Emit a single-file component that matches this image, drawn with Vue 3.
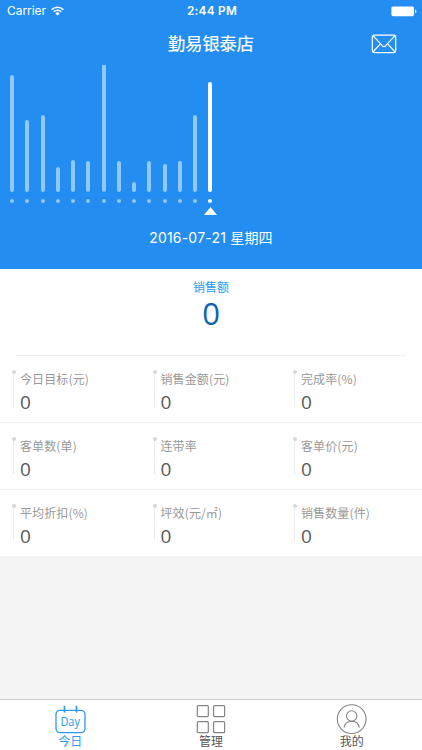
<script setup>
const bars = [117, 72, 77.5, 25.5, 32, 31.5, 127, 31.5, 10, 31.5, 28, 31.5, 77.5, 110]

const rows = [
  ['今日目标(元)', '销售金额(元)', '完成率(%)'],
  ['客单数(单)', '连带率', '客单价(元)'],
  ['平均折扣(%)', '坪效(元/㎡)', '销售数量(件)'],
]
</script>

<template>
  <div class="screen">
    <header class="hero">
      <div class="status">
        <div class="carrier">
          <span>Carrier</span>
          <svg class="wifi" viewBox="0 0 13 10" fill="none" stroke="#fff" stroke-width="1.6">
            <path d="M.6 3.7a8.4 8.4 0 0 1 11.8 0" />
            <path d="M2.7 5.8a5.4 5.4 0 0 1 7.6 0" />
            <path d="M6.5 9.6 4.3 7.4a3.1 3.1 0 0 1 4.4 0z" fill="#fff" stroke="none" />
          </svg>
        </div>
        <span class="clock">2:44 PM</span>
        <svg class="battery" viewBox="0 0 26 11">
          <rect x=".4" y=".4" width="22.6" height="9.8" rx="1.6" fill="#fff" />
          <path d="M24 3.6v3.6q1.4-.4 1.4-1.8T24 3.6z" fill="#fff" />
        </svg>
      </div>
      <div class="titlebar">
        <h1>勤易银泰店</h1>
        <svg class="mail" viewBox="0 0 26 20" fill="none" stroke="#fff" stroke-width="1.2" stroke-linejoin="round">
          <rect x="1.3" y="1.1" width="23.4" height="17.5" rx="2" />
          <path d="M1.9 1.7 10.2 10.3C11.6 13.4 14.4 13.4 15.8 10.3L24.1 1.7M1.9 18 9.6 9.7M24.1 18l-7.7-8.3" />
        </svg>
      </div>
      <div class="chart">
        <div v-for="(h, i) in bars" :key="i" class="col" :class="{ active: i === 13, clipped: i === 6 }">
          <i class="bar" :style="{ height: h + 'px' }"></i>
          <i class="dot"></i>
          <svg v-if="i === 13" class="pointer" viewBox="0 0 13 8"><path d="M6.5 0 13 8H0z" fill="#fff" /></svg>
        </div>
      </div>
      <div class="date">2016-07-21 星期四</div>
    </header>

    <section class="summary">
      <div class="label">销售额</div>
      <div class="total">0</div>
    </section>

    <section class="metrics">
      <div v-for="(row, r) in rows" :key="r" class="row">
        <div v-for="name in row" :key="name" class="cell">
          <i class="pin"></i>
          <div>
            <div class="name">{{ name }}</div>
            <div class="value">0</div>
          </div>
        </div>
      </div>
    </section>

    <nav class="tabs">
      <div class="tab current">
        <svg viewBox="0 0 32 30" fill="none" stroke="#2b9af0">
          <rect x="2" y="5.3" width="29" height="22.3" rx="4" stroke-width="1.3" />
          <path d="M10.5 .8v6.8M22.5 .8v6.8" stroke-width="1.7" />
          <text x="6.4" y="21.2" textLength="19.5" lengthAdjust="spacingAndGlyphs" class="day">Day</text>
        </svg>
        <span>今日</span>
      </div>
      <div class="tab">
        <svg viewBox="0 0 32 30" fill="none" stroke="#858585" stroke-width="1.2">
          <rect x="2.3" y=".6" width="11" height="11" rx="1" />
          <rect x="18.6" y=".6" width="11" height="11" rx="1" />
          <rect x="2.3" y="16.7" width="11" height="11" rx="1" />
          <rect x="18.6" y="16.7" width="11" height="11" rx="1" />
        </svg>
        <span>管理</span>
      </div>
      <div class="tab">
        <svg viewBox="0 0 32 30" fill="none" stroke="#858585" stroke-width="1.1">
          <circle cx="15.7" cy="14.1" r="14.4" />
          <circle cx="15.7" cy="11" r="5.2" />
          <path d="M8.1 22.7c.6-4 3.6-6.5 7.6-6.5s7 2.5 7.6 6.5" />
        </svg>
        <span>我的</span>
      </div>
    </nav>
  </div>
</template>

<style>
body {
  margin: 0;
}
</style>

<style scoped>
.screen {
  width: 422px;
  height: 750px;
  display: flex;
  flex-direction: column;
  background: #f3f3f3;
  overflow: hidden;
  font-family: Inter, "Noto Sans CJK SC", sans-serif;
}
.hero {
  height: 269px;
  background: #238df2;
  color: #fff;
  display: flex;
  flex-direction: column;
}
.status {
  height: 22px;
  box-sizing: border-box;
  padding: 0 5px 0 7px;
  display: grid;
  grid-template-columns: 1fr auto 1fr;
  align-items: center;
  font-size: 12px;
  line-height: 22px;
}
.carrier {
  display: flex;
  align-items: center;
  gap: 5px;
  letter-spacing: -0.05px;
}
.wifi {
  width: 13px;
  height: 10px;
  margin-bottom: 1px;
}
.clock {
  font-weight: 600;
  font-size: 11.8px;
  letter-spacing: 0.25px;
}
.battery {
  width: 26px;
  height: 11px;
  justify-self: end;
}
.titlebar {
  height: 43px;
  display: grid;
  grid-template-columns: 1fr auto 1fr;
  align-items: center;
}
h1 {
  grid-column: 2;
  margin: 0;
  font-size: 17.2px;
  line-height: 43px;
  font-weight: 400;
  -webkit-text-stroke: 0.2px #fff;
}
.mail {
  width: 26px;
  height: 20px;
  justify-self: end;
  margin-right: 25px;
}
.chart {
  height: 151px;
  padding-left: 4.4px;
  display: flex;
}
.col {
  width: 15.27px;
  height: 150px;
  display: flex;
  flex-direction: column;
  align-items: center;
}
.bar {
  width: 4px;
  margin-top: auto;
  border-radius: 2px;
  background: #90c8fa;
}
.clipped .bar {
  border-radius: 0 0 2px 2px;
}
.dot {
  width: 4px;
  height: 4px;
  flex: none;
  margin: 6.5px 0 12.5px;
  border-radius: 50%;
  background: #90c8fa;
}
.active .bar,
.active .dot {
  background: #fff;
}
.active .dot {
  margin-bottom: 4.5px;
}
.pointer {
  width: 13px;
  height: 8px;
  flex: none;
}
.date {
  margin-top: 11px;
  text-align: center;
  font-size: 14px;
  letter-spacing: 0.2px;
  line-height: 22px;
}
.summary {
  height: 86px;
  background: #fff;
  text-align: center;
}
.label {
  padding-top: 9px;
  font-size: 12px;
  line-height: 20px;
  color: #2b9af0;
}
.total {
  font-family: "Open Sans", sans-serif;
  font-size: 31px;
  line-height: 30px;
  color: #0d66ad;
}
.metrics {
  background: #fff;
}
.row {
  height: 67px;
  box-sizing: border-box;
  display: grid;
  grid-template-columns: repeat(3, 140.5px);
  border-top: 1px solid #efefef;
}
.row:first-child {
  margin: 0 16px;
}
.row:first-child .cell {
  margin-left: -16px;
  margin-right: 16px;
}
.cell {
  display: flex;
  padding: 13px 0 0 12px;
  gap: 4px;
}
.pin {
  width: 4px;
  height: 38px;
  background:
    radial-gradient(circle at 2px 3px, #d9d9d9 1.8px, transparent 2.2px),
    linear-gradient(#ececec, #ececec) 1px 4px / 1px 34px no-repeat;
}
.name {
  font-family: "Noto Sans CJK SC", sans-serif;
  font-size: 12px;
  letter-spacing: 0.12px;
  line-height: 20px;
  color: #999;
  white-space: nowrap;
}
.value {
  font-family: "Open Sans", sans-serif;
  font-size: 19px;
  line-height: 26px;
  color: #5a5a5a;
}
.tabs {
  margin-top: auto;
  height: 51px;
  box-sizing: border-box;
  border-top: 1px solid #d0d0d0;
  background: #fff;
  display: grid;
  grid-template-columns: repeat(3, 1fr);
}
.tab {
  display: flex;
  flex-direction: column;
  align-items: center;
  padding-top: 5px;
  color: #555;
  font-size: 12px;
  line-height: 14px;
}
.tab svg {
  width: 32px;
  height: 30px;
  overflow: visible;
}
.current {
  color: #2b9af0;
}
.day {
  font-family: "Open Sans", sans-serif;
  font-size: 12px;
  fill: #2b9af0;
  stroke: none;
}
</style>
